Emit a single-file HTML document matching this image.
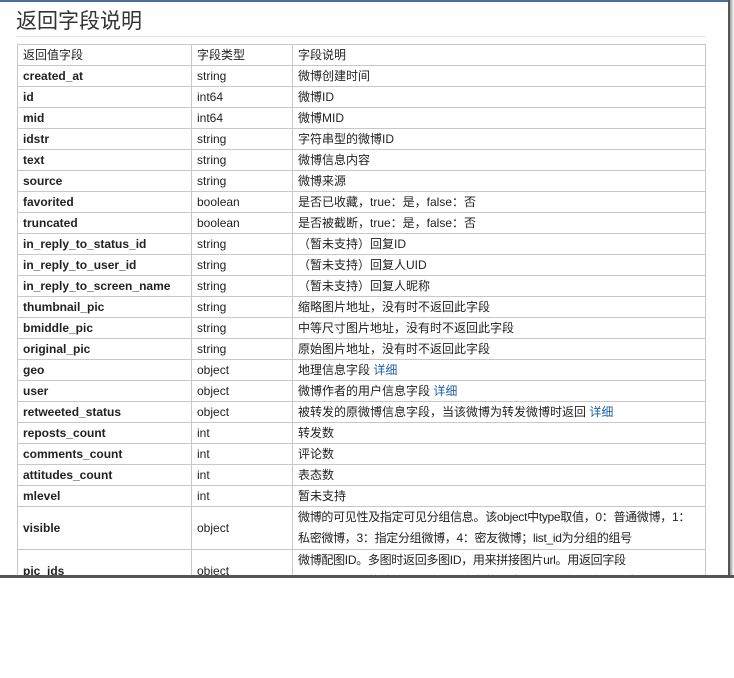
<!DOCTYPE html>
<html><head><meta charset="utf-8"><style>
body{margin:0;width:734px;height:578px;overflow:hidden;background:#fff;font-family:"Liberation Sans","Noto Sans CJK SC",sans-serif;position:relative}
.top{position:absolute;left:0;top:0;width:729px;height:2px;background:#4a6f9c}
.rs{position:absolute;left:728px;top:0;width:2px;height:578px;background:#555}
.rs2{position:absolute;left:730px;top:0;width:4px;height:578px;background:linear-gradient(90deg,#999,#fff)}
.bs{position:absolute;left:0;top:575px;width:734px;height:3px;background:#555}
.cover{position:absolute;left:0;top:578px;width:734px;height:100px;background:#fff}
h1{position:absolute;left:16px;top:5px;margin:0;font-size:21px;font-weight:normal;color:#333}
.hr{position:absolute;left:16px;top:36px;width:690px;height:1px;background:#e4e4e4}
table{position:absolute;left:17px;top:44px;width:689px;border-collapse:collapse;font-size:12px;color:#222}
td{border:1px solid #c8c8c8;height:20px;padding:0 5px;line-height:20px;vertical-align:middle;white-space:nowrap}
td:first-child{font-weight:bold;width:163px}
td:nth-child(2){width:90px}
tr:first-child td{font-weight:normal}
td.m{line-height:21px}
a{color:#1f5fa8;text-decoration:none}
</style></head><body>
<div class="top"></div>
<h1>返回字段说明</h1>
<div class="hr"></div>
<table>
<tr><td>返回值字段</td><td>字段类型</td><td>字段说明</td></tr>
<tr><td>created_at</td><td>string</td><td>微博创建时间</td></tr>
<tr><td>id</td><td>int64</td><td>微博ID</td></tr>
<tr><td>mid</td><td>int64</td><td>微博MID</td></tr>
<tr><td>idstr</td><td>string</td><td>字符串型的微博ID</td></tr>
<tr><td>text</td><td>string</td><td>微博信息内容</td></tr>
<tr><td>source</td><td>string</td><td>微博来源</td></tr>
<tr><td>favorited</td><td>boolean</td><td>是否已收藏，true：是，false：否</td></tr>
<tr><td>truncated</td><td>boolean</td><td>是否被截断，true：是，false：否</td></tr>
<tr><td>in_reply_to_status_id</td><td>string</td><td>（暂未支持）回复ID</td></tr>
<tr><td>in_reply_to_user_id</td><td>string</td><td>（暂未支持）回复人UID</td></tr>
<tr><td>in_reply_to_screen_name</td><td>string</td><td>（暂未支持）回复人昵称</td></tr>
<tr><td>thumbnail_pic</td><td>string</td><td>缩略图片地址，没有时不返回此字段</td></tr>
<tr><td>bmiddle_pic</td><td>string</td><td>中等尺寸图片地址，没有时不返回此字段</td></tr>
<tr><td>original_pic</td><td>string</td><td>原始图片地址，没有时不返回此字段</td></tr>
<tr><td>geo</td><td>object</td><td>地理信息字段 <a>详细</a></td></tr>
<tr><td>user</td><td>object</td><td>微博作者的用户信息字段 <a>详细</a></td></tr>
<tr><td>retweeted_status</td><td>object</td><td>被转发的原微博信息字段，当该微博为转发微博时返回 <a>详细</a></td></tr>
<tr><td>reposts_count</td><td>int</td><td>转发数</td></tr>
<tr><td>comments_count</td><td>int</td><td>评论数</td></tr>
<tr><td>attitudes_count</td><td>int</td><td>表态数</td></tr>
<tr><td>mlevel</td><td>int</td><td>暂未支持</td></tr>
<tr><td>visible</td><td>object</td><td class="m" style="letter-spacing:-0.3px">微博的可见性及指定可见分组信息。该object中type取值，0：普通微博，1：<br>私密微博，3：指定分组微博，4：密友微博；list_id为分组的组号</td></tr>
<tr><td>pic_ids</td><td>object</td><td class="m" style="letter-spacing:-0.3px">微博配图ID。多图时返回多图ID，用来拼接图片url。用返回字段<br>thumbnail_pic的地址配上该返回字段的图片ID，即可得到多个图片url。</td></tr>
</table>
<div class="cover"></div>
<div class="rs"></div><div class="rs2"></div><div class="bs"></div>
</body></html>
